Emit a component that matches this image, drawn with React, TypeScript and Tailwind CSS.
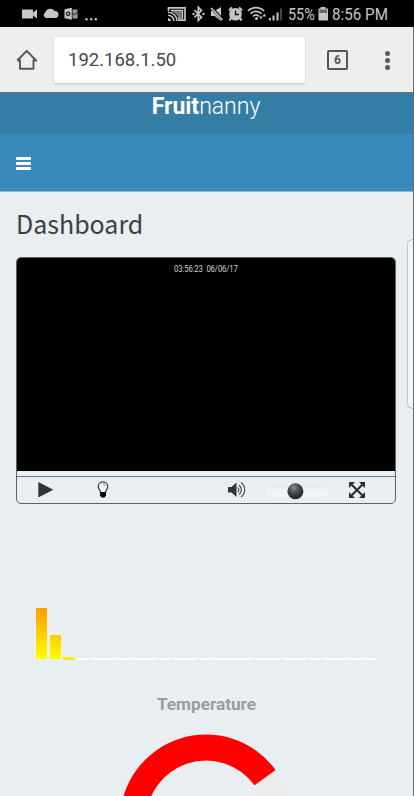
import React from "react";

function StatusBar() {
  return (
    <div className="flex h-[27px] shrink-0 bg-black font-['Roboto',sans-serif] text-[17px] leading-[29px] text-[#c6c6c6]">
      <svg width="288" height="27" viewBox="0 0 288 27" fill="#c6c6c6" className="shrink-0">
        <path d="M22 9.500h11v3l4-3v9l-4-3v3H22z" />
        <path d="M46 18a3.100 3.100 0 0 1-.5-5.800 5 5 0 0 1 9-1.200 3.600 3.600 0 0 1 1.500 7z" />
        <path d="M64.500 9.300l7.300-1.500v12l-7.300-1.500z" />
        <path d="M72.500 9.500h5v9h-5z" fill="#9a9a9a" />
        <path d="M72 13l2.500 2 3.500-4" stroke="#222" fill="none" />
        <circle cx="68.200" cy="13.800" r="1.700" fill="none" stroke="#222" strokeWidth="1.300" />
        <circle cx="86.500" cy="19.300" r="1.200" /><circle cx="91.200" cy="19.300" r="1.200" /><circle cx="95.800" cy="19.300" r="1.200" />
        <g fill="none" stroke="#c6c6c6">
          <path d="M168.500 11V7.800h16.500v12.400h-7" strokeWidth="1.700" />
          <path d="M171 10.500h11.500v7.500h-5" strokeWidth="1.300" />
          <path d="M168 12.200a9 9 0 0 1 9 8.800M168 15.200a6 6 0 0 1 6 5.800" strokeWidth="1.600" />
          <path d="M194.500 10.200l7 7-3.200 3.300V7.200l3.200 3.200-7 7" strokeWidth="1.700" />
        </g>
        <path d="M171.500 11h10.500v6.500h-4a11 11 0 0 0-6.500-6z" fill="#777" />
        <path d="M168 18.200a2.800 2.800 0 0 1 2.800 2.800H168z" />
        <circle cx="193.500" cy="14" r="1.200" /><circle cx="203.500" cy="14" r="1.200" />
        <path d="M211 11h3.500L221 7v14l-6.500-5H211z" />
        <path d="M211 7.500l12 12.500" stroke="#000" strokeWidth="3" /><path d="M211 8l11.500 12" stroke="#c6c6c6" strokeWidth="1.800" />
        <circle cx="235.500" cy="14.200" r="6.300" />
        <path d="M229 10.500l3-3M242 10.500l-3-3M231 18l-1.500 2.500M240 18l1.500 2.500" stroke="#c6c6c6" strokeWidth="2.200" />
        <path d="M235.500 10.500v4h3.500" fill="none" stroke="#111" strokeWidth="1.400" />
        <g fill="none" stroke="#c6c6c6" strokeWidth="1.700">
          <path d="M248 11a11 11 0 0 1 16 0M250.500 13.700a7.500 7.500 0 0 1 11 0M253 16.300a4.500 4.500 0 0 1 6 0" />
        </g>
        <circle cx="256.500" cy="18.500" r="1.500" />
        <path d="M259 16.500l1.800 3 1.800-3zM262.500 16.500l1.800-3 1.800 3z" />
        <path d="M269 18h2v2.500h-2zM272.500 15.500h2v5h-2zM276.500 12.500h2v8h-2z" />
        <path d="M280 8.500h2v12h-2z" fill="#444" />
      </svg>
      <span className="w-[30px] shrink-0 origin-left scale-x-[0.85] whitespace-nowrap">55%</span>
      <svg width="14" height="27" viewBox="0 0 14 27" className="shrink-0">
        <path d="M2.500 7h5v1.500H10v12H.5v-12h2z" fill="#c6c6c6" /><path d="M1.500 9.500H9V13H1.500z" fill="#666" />
      </svg>
      <span className="w-[58px] shrink-0 origin-left scale-x-[0.895] whitespace-nowrap">8:56 PM</span>
    </div>
  );
}

function BrowserBar() {
  return (
    <div className="flex h-[66px] shrink-0 items-start border-b border-[#5b7b84] bg-[#eeefed]">
      <svg width="54" height="65" viewBox="0 0 54 65" fill="none" stroke="#55555a" strokeWidth="1.900" className="shrink-0">
        <path d="M20 32.500v9.300h13.500v-9.300M17.300 33.500l9.400-9.700 9.400 9.700h-3M17.300 33.500H20.500" strokeLinejoin="round" />
      </svg>
      <div className="mt-[10px] h-[46px] w-[251px] rounded-[2px] bg-white pl-[14px] font-['Roboto',sans-serif] text-[18.500px] leading-[46px] text-[#48484c] shadow-[0_1px_2px_#bbc3c7]">
        192.168.1.50
      </div>
      <div className="mt-[23px] ml-[22px] flex h-[20px] w-[21px] items-center justify-center rounded-[2px] border-2 border-[#55565b] font-['Roboto',sans-serif] text-[12px] font-bold text-[#55565b]">
        6
      </div>
      <div className="mt-[24px] ml-[37px] flex flex-col gap-[2.500px]">
        <i className="size-[4.500px] rounded-full bg-[#58595d]" />
        <i className="size-[4.500px] rounded-full bg-[#58595d]" />
        <i className="size-[4.500px] rounded-full bg-[#58595d]" />
      </div>
    </div>
  );
}

function Player() {
  return (
    <div className="mt-[16px] ml-[16px] flex h-[247px] w-[380px] flex-col overflow-hidden rounded-[5px] border border-[#5d6265]">
      <div className="h-[213px] shrink-0 bg-black pt-[6px] pl-[157px] font-['Roboto',sans-serif] text-[8.500px] leading-[11px] text-[#d5d5d5]">
        <div className="w-[80px] origin-left scale-x-[0.900] whitespace-pre tracking-[-0.100px]">03:56:23  06/06/17</div>
      </div>
      <div className="h-[6px] shrink-0 border-b border-[#6d7275] bg-[#eaeff4]" />
      <div className="flex h-[26px]">
        <svg width="378" height="26" viewBox="17 477 378 26">
          <defs>
            <radialGradient id="knob" cx="40%" cy="27%" r="70%">
              <stop stopColor="#85898b" /><stop offset=".5" stopColor="#464a4c" /><stop offset="1" stopColor="#202325" />
            </radialGradient>
            <linearGradient id="track" x2="0" y2="1">
              <stop stopColor="#e3e6e8" /><stop offset=".35" stopColor="#f0f2f4" /><stop offset="1" stopColor="#f4f5f6" />
            </linearGradient>
          </defs>
          <path d="M38.300 482l15 7.800-15 7.700z" fill="#2f3437" />
          <path d="M100.500 492.500c0-2.500-2.200-3-2.200-6a4.700 4.700 0 0 1 9.400 0c0 3-2.200 3.500-2.200 6z" fill="#edf1f4" stroke="#33383b" strokeWidth="1.200" />
          <path d="M103 484q2 0 2.400 2" fill="none" stroke="#555" strokeWidth=".8" />
          <path d="M100 492h6v3.500l-1.500 2h-3l-1.500-2z" fill="#060708" />
          <path d="M228 487h3.500l5-4.500v14.500l-5-4.500H228z" fill="#303538" />
          <g fill="none" stroke="#4d5255" strokeWidth="1.200">
            <path d="M237.800 487.500a3 3 0 0 1 0 4.500M239 485a6 6 0 0 1 0 9.500M241 482.500a9 9 0 0 1 0 14.500" />
          </g>
          <rect x="266" y="486" width="62" height="11" rx="5.500" fill="url(#track)" />
          <circle cx="295.400" cy="491.300" r="8" fill="url(#knob)" />
          <path d="M351.500 484.500l11 11M362.500 484.500l-11 11" stroke="#2c3134" strokeWidth="2.200" />
          <path d="M349 482h6l-6 6zM365 482h-6l6 6zM349 498h6l-6-6zM365 498h-6l6-6z" fill="#2c3134" />
        </svg>
      </div>
    </div>
  );
}

function Spectrum() {
  const idle = Array.from({ length: 22 }, (_, i) => i);
  return (
    <div className="mt-[103px] ml-[35px] flex h-[53px] items-end gap-[0.660px]">
      <i className="h-[53px] w-[13px] shrink-0 border border-[#f7f4df] bg-linear-to-b from-[#ff9c00] to-[#ffff00]" />
      <i className="h-[26px] w-[13px] shrink-0 border border-[#f7f4df] bg-linear-to-b from-[#ffcc00] to-[#ffff00]" />
      <i className="ml-[1px] h-[3px] w-[12px] shrink-0 bg-[#f9ed00]" />
      {idle.map((n) => <i key={n} className="ml-[1px] h-[2px] w-[12px] shrink-0 bg-[#fcfdfd]" />)}
    </div>
  );
}

export default function App() {
  return (
    <div className="relative flex h-[796px] w-[414px] flex-col overflow-hidden bg-[#e9eef3]">
      <StatusBar />
      <BrowserBar />
      <header className="h-[41px] shrink-0 bg-[#347da5] text-center font-['Roboto',sans-serif] text-[23px] leading-[27px] font-light text-white">
        <div className="-ml-[2px]"><b className="font-bold">Fruit</b>nanny</div>
      </header>
      <nav className="flex h-[58px] shrink-0 flex-col gap-[2px] border-b border-[#91b7cf] bg-[#398aba] pt-[23px] pl-[16px]">
        <i className="h-[3px] w-[15px] rounded-[1px] bg-white" />
        <i className="h-[3px] w-[15px] rounded-[1px] bg-white" />
        <i className="h-[3px] w-[15px] rounded-[1px] bg-white" />
      </nav>
      <main className="flex-1">
        <h1 className="mt-[9px] ml-[16px] h-[40px] font-['Noto_Sans_CJK_SC',sans-serif] text-[25px] leading-[44px] font-normal text-[#3b4043]">Dashboard</h1>
        <Player />
        <Spectrum />
        <h2 className="mt-[32px] h-[25px] text-center font-['Roboto',sans-serif] text-[17.200px] leading-[24px] font-bold text-[#999c9f]">
          <span className="mr-[1px]">Temperature</span>
        </h2>
        <svg width="414" height="79" viewBox="0 717 414 79">
          <circle cx="206" cy="820.500" r="73" fill="none" stroke="#ebebea" strokeWidth="26" />
          <path d="M120 820.500A86 86 0 0 1 275.600 770l-21.100 15.300A60 60 0 0 0 146 820.500z" fill="#fe0000" />
        </svg>
      </main>
      <div className="absolute top-[239px] right-0 h-[170px] w-[7px] rounded-l-[6px] border border-r-0 border-[#c4c8cc] bg-[#f1f4f6]" />
      <div className="absolute top-[27px] right-0 h-[769px] w-px bg-[#656b70]" />
    </div>
  );
}
